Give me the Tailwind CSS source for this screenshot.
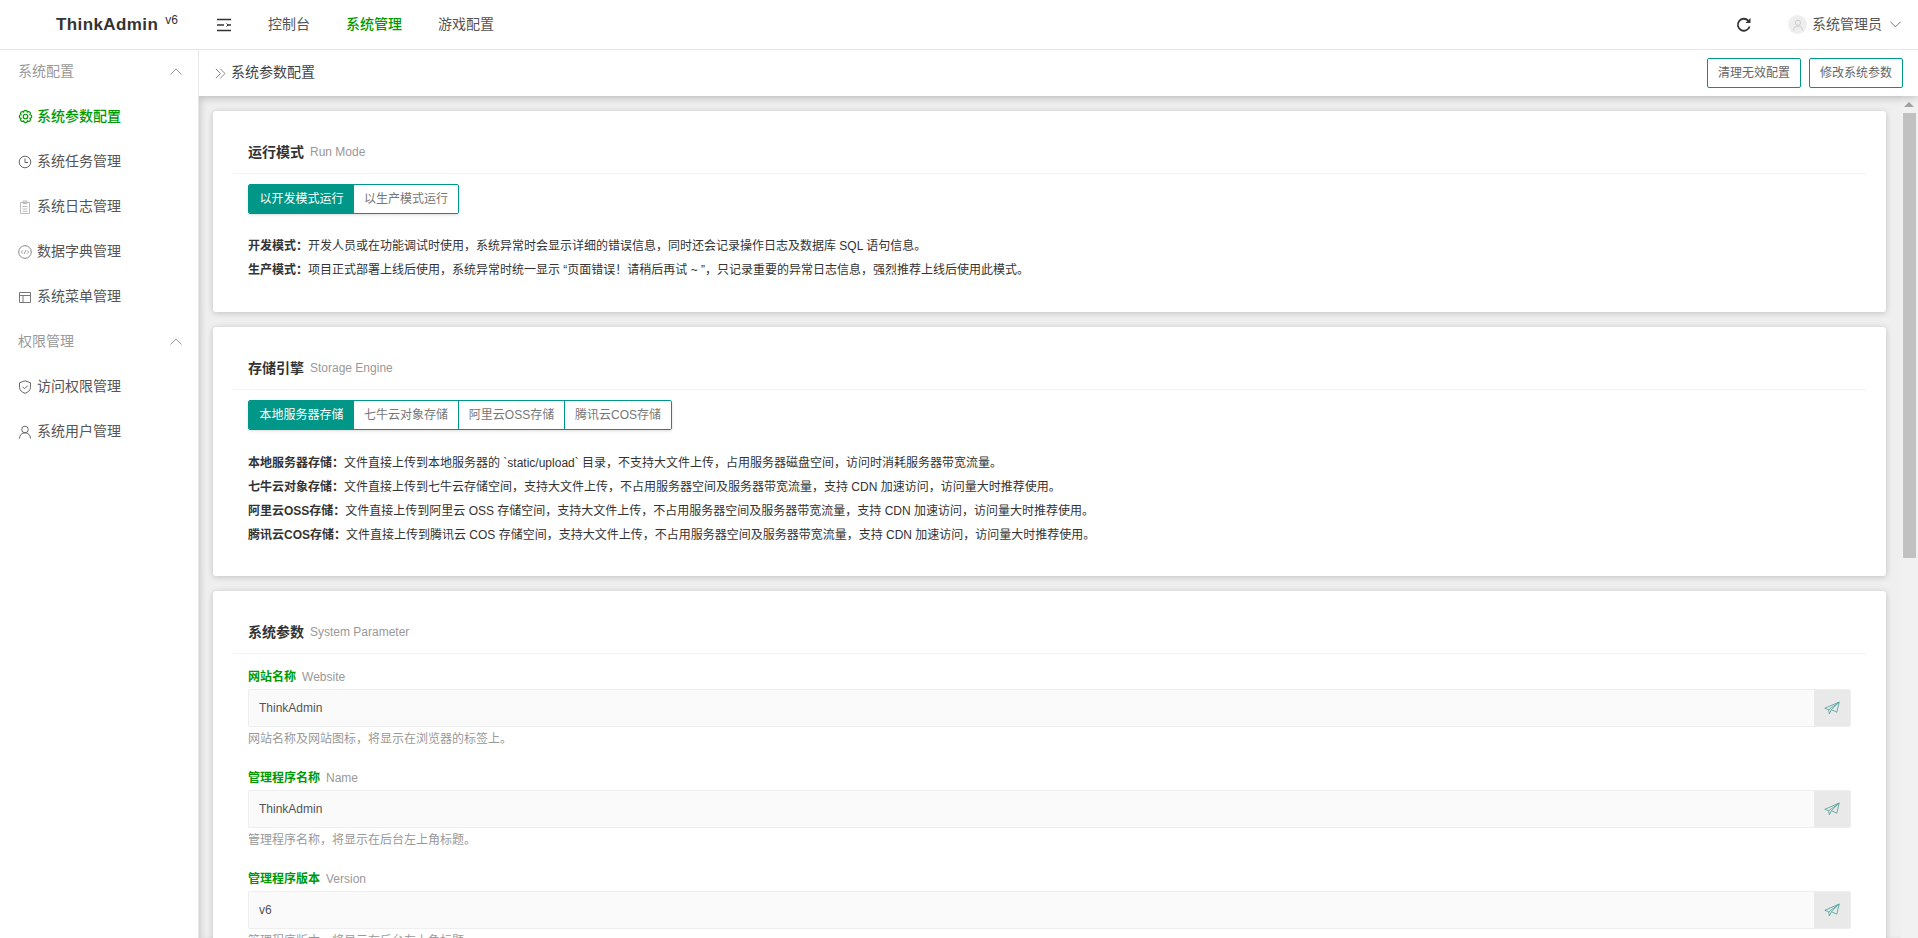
<!DOCTYPE html>
<html lang="zh-CN">
<head>
    <meta charset="UTF-8">
    <title>系统参数配置 · ThinkAdmin</title>
    <script src="https://cdn.jsdelivr.net/npm/@tailwindcss/browser@4"></script>
</head>
<body class="h-[938px] overflow-hidden bg-white text-[#333] text-[14px] font-['Liberation_Sans','Noto_Sans_CJK_SC',sans-serif]">

    <!-- 顶部导航 -->
    <header class="relative z-20 bg-white flex items-center h-[50px] border-b border-[#e6e6e6]">
        <div class="w-[199px] h-full pl-[56px] flex items-center shrink-0">
            <span class="text-[17px] tracking-[0.4px] font-bold text-[#333] leading-none">ThinkAdmin</span>
            <span class="text-[12px] text-[#333] ml-[7px] -mt-[9px] leading-none">v6</span>
        </div>
        <button class="ml-[18px] w-[14px] h-[14px] shrink-0">
            <svg viewBox="0 0 14 14" class="w-[14px] h-[14px]" fill="none" stroke="#333" stroke-width="1.4">
                <path d="M0 1.5h14M0 12.5h14M0 7h7M10 7h4"/>
                <path d="M9.5 5.5l1.6 1.5-1.6 1.5" stroke-width="1"/>
            </svg>
        </button>
        <nav class="flex ml-[19px]">
            <a class="px-[18px] text-[#555]">控制台</a>
            <a class="px-[18px] text-[#090] font-medium">系统管理</a>
            <a class="px-[18px] text-[#555]">游戏配置</a>
        </nav>
        <div class="ml-auto flex items-center pr-[17px]">
            <svg viewBox="0 0 16 16" class="w-[16px] h-[16px]" fill="none" stroke="#333" stroke-width="1.8">
                <path d="M13.6 9.5A6 6 0 1 1 12.2 3.6"/>
                <path d="M14.5 1v5h-5z" fill="#333" stroke="none"/>
            </svg>
            <div class="ml-[36px] w-[19px] h-[19px] rounded-full bg-[#eee] flex items-center justify-center">
                <svg viewBox="0 0 12 12" class="w-[12px] h-[12px]" fill="none" stroke="#ccc" stroke-width="1">
                    <circle cx="6" cy="3.8" r="2.6"/>
                    <path d="M1.5 11.5c0-3 2-4.5 4.5-4.5s4.5 1.500 4.500 4.500"/>
                </svg>
            </div>
            <span class="ml-[5px] text-[#555] w-[70px]">系统管理员</span>
            <svg viewBox="0 0 12 7" class="ml-[8px] w-[11px] h-[7px]" fill="none" stroke="#666" stroke-width="1"><path d="M.5 .5L6 6l5.500-5.500"/></svg>
        </div>
    </header>

    <div class="flex h-[888px]">
        <!-- 侧边菜单 -->
        <aside class="relative z-20 w-[199px] shrink-0 border-r border-[#e6e6e6] bg-white text-[#555]">
            <div class="-mt-[1px] h-[45px] flex items-center justify-between pl-[18px] pr-[16px] text-[#999]">
                <span>系统配置</span>
                <svg viewBox="0 0 12 7" class="w-[12px] h-[7px]" fill="none" stroke="#999" stroke-width="1"><path d="M.5 6.500L6 1l5.500 5.500"/></svg>
            </div>
            <div class="h-[45px] flex items-center pl-[18px] gap-[4px] text-[#090] font-medium">
                <svg viewBox="0 0 16 16" class="w-[15px] h-[15px]" fill="none" stroke="#090" stroke-width="1.300">
                    <path d="M12.800 6.010A2 2 0 0 1 12.800 9.990A2 2 0 0 1 9.990 12.800A2 2 0 0 1 6.010 12.800A2 2 0 0 1 3.200 9.990A2 2 0 0 1 3.200 6.010A2 2 0 0 1 6.010 3.200A2 2 0 0 1 9.990 3.200A2 2 0 0 1 12.800 6.010Z"/>
                    <circle cx="8" cy="8" r="2.400"/>
                </svg>
                <span>系统参数配置</span>
            </div>
            <div class="h-[45px] flex items-center pl-[18px] gap-[5px]">
                <svg viewBox="0 0 14 14" class="w-[14px] h-[14px]" fill="none" stroke="#666" stroke-width="1"><circle cx="7" cy="7" r="5.800"/><path d="M7 3.500V7.500H10"/></svg>
                <span>系统任务管理</span>
            </div>
            <div class="h-[45px] flex items-center pl-[18px] gap-[5px]">
                <svg viewBox="0 0 14 14" class="w-[14px] h-[14px]" fill="none" stroke="#bbb" stroke-width="1"><path d="M2.500 2.500h9v11h-9zM5 1h4v2.500H5zM4.500 6.500h5M4.500 9h5M4.500 11.300h5"/></svg>
                <span>系统日志管理</span>
            </div>
            <div class="h-[45px] flex items-center pl-[18px] gap-[5px]">
                <svg viewBox="0 0 14 14" class="w-[14px] h-[14px]" fill="none" stroke="#888" stroke-width="1"><circle cx="7" cy="7" r="6.300"/><path d="M4.800 5.500L3.300 7l1.500 1.500M9.200 5.500L10.700 7 9.200 8.500M7.800 5L6.200 9" stroke-width=".8"/></svg>
                <span>数据字典管理</span>
            </div>
            <div class="h-[45px] flex items-center pl-[18px] gap-[5px]">
                <svg viewBox="0 0 14 14" class="w-[14px] h-[14px]" fill="none" stroke="#777" stroke-width="1"><path d="M1.500 2.500h11v10h-11zM1.500 5.500h11M5 5.500v7"/></svg>
                <span>系统菜单管理</span>
            </div>
            <div class="h-[45px] flex items-center justify-between pl-[18px] pr-[16px] text-[#999]">
                <span>权限管理</span>
                <svg viewBox="0 0 12 7" class="w-[12px] h-[7px]" fill="none" stroke="#999" stroke-width="1"><path d="M.5 6.500L6 1l5.500 5.500"/></svg>
            </div>
            <div class="h-[45px] flex items-center pl-[18px] gap-[5px]">
                <svg viewBox="0 0 14 14" class="w-[14px] h-[14px]" fill="none" stroke="#666" stroke-width="1"><path d="M7 .8l5.500 2v4.500c0 3-2.500 5-5.500 6-3-1-5.500-3-5.500-6V2.800z"/><path d="M4.500 6.800L6.500 8.800 9.800 5.500"/></svg>
                <span>访问权限管理</span>
            </div>
            <div class="h-[45px] flex items-center pl-[18px] gap-[5px]">
                <svg viewBox="0 0 14 14" class="w-[14px] h-[14px]" fill="none" stroke="#666" stroke-width="1"><circle cx="7" cy="4.500" r="3.300"/><path d="M1.500 13.500c0-3.500 2.500-5.700 5.500-5.700s5.500 2.200 5.500 5.700"/></svg>
                <span>系统用户管理</span>
            </div>
        </aside>

        <!-- 主体 -->
        <main class="flex-1 min-w-0 flex flex-col">
            <div class="relative z-10 h-[46px] shrink-0 bg-white flex items-center pl-[16px] pr-[15px] shadow-[0_2px_8px_rgba(0,0,0,0.2)]">
                <svg viewBox="0 0 11 11" class="w-[11px] h-[11px]" fill="none" stroke="#888" stroke-width="1"><path d="M.8 .8L5.500 5.500.8 10.200M5.300 .8L10 5.500 5.300 10.200"/></svg>
                <span class="ml-[5px] -mt-[2px] text-[#444]">系统参数配置</span>
                <div class="ml-auto flex gap-[8px] text-[12px] text-[#666]">
                    <button class="w-[94px] h-[30px] border border-[#009688] rounded-[2px] bg-white">清理无效配置</button>
                    <button class="w-[94px] h-[30px] border border-[#009688] rounded-[2px] bg-white">修改系统参数</button>
                </div>
            </div>

            <div class="flex-1 min-h-0 flex bg-[#efefef] overflow-hidden">
                <div class="flex-1 min-w-0 pl-[14px] pr-[15px] pt-[15px] flex flex-col gap-[15px] shadow-[inset_5px_0_6px_-3px_rgba(0,0,0,0.15)]">

                    <!-- 运行模式 -->
                    <section class="h-[201px] shrink-0 bg-white rounded-[3px] shadow-[0_1px_6px_rgba(0,0,0,0.2)] px-[20px] pt-[20px]">
                        <h3 class="h-[43px] border-b border-[#f4f4f4] pl-[15px] flex items-center font-bold text-[14px]">运行模式<span class="ml-[6px] text-[12px] font-normal text-[#999]">Run Mode</span></h3>
                        <div class="pl-[15px]">
                            <div class="mt-[10px] inline-flex h-[30px] border border-[#009688] rounded-[2px] overflow-hidden text-[12px] shadow-[0_1px_3px_rgba(0,0,0,0.15)]">
                                <span class="w-[105px] bg-[#009688] text-white flex items-center justify-center">以开发模式运行</span>
                                <span class="w-[104px] bg-white text-[#777] flex items-center justify-center">以生产模式运行</span>
                            </div>
                            <div class="mt-[20px] text-[12px] leading-[24px] text-[#333]">
                                <p><b>开发模式：</b>开发人员或在功能调试时使用，系统异常时会显示详细的错误信息，同时还会记录操作日志及数据库 SQL 语句信息。</p>
                                <p><b>生产模式：</b>项目正式部署上线后使用，系统异常时统一显示 “页面错误！请稍后再试 ~ ”，只记录重要的异常日志信息，强烈推荐上线后使用此模式。</p>
                            </div>
                        </div>
                    </section>

                    <!-- 存储引擎 -->
                    <section class="h-[249px] shrink-0 bg-white rounded-[3px] shadow-[0_1px_6px_rgba(0,0,0,0.2)] px-[20px] pt-[20px]">
                        <h3 class="h-[43px] border-b border-[#f4f4f4] pl-[15px] flex items-center font-bold text-[14px]">存储引擎<span class="ml-[6px] text-[12px] font-normal text-[#999]">Storage Engine</span></h3>
                        <div class="pl-[15px]">
                            <div class="mt-[10px] inline-flex h-[30px] border border-[#009688] rounded-[2px] overflow-hidden text-[12px] shadow-[0_1px_3px_rgba(0,0,0,0.15)]">
                                <span class="w-[105px] bg-[#009688] text-white flex items-center justify-center">本地服务器存储</span>
                                <span class="w-[105px] bg-white text-[#777] flex items-center justify-center border-r border-[#009688]">七牛云对象存储</span>
                                <span class="w-[106px] bg-white text-[#777] flex items-center justify-center border-r border-[#009688]">阿里云OSS存储</span>
                                <span class="w-[106px] bg-white text-[#777] flex items-center justify-center">腾讯云COS存储</span>
                            </div>
                            <div class="mt-[21px] text-[12px] leading-[24px] text-[#333]">
                                <p><b>本地服务器存储：</b>文件直接上传到本地服务器的 `static/upload` 目录，不支持大文件上传，占用服务器磁盘空间，访问时消耗服务器带宽流量。</p>
                                <p><b>七牛云对象存储：</b>文件直接上传到七牛云存储空间，支持大文件上传，不占用服务器空间及服务器带宽流量，支持 CDN 加速访问，访问量大时推荐使用。</p>
                                <p><b>阿里云OSS存储：</b>文件直接上传到阿里云 OSS 存储空间，支持大文件上传，不占用服务器空间及服务器带宽流量，支持 CDN 加速访问，访问量大时推荐使用。</p>
                                <p><b>腾讯云COS存储：</b>文件直接上传到腾讯云 COS 存储空间，支持大文件上传，不占用服务器空间及服务器带宽流量，支持 CDN 加速访问，访问量大时推荐使用。</p>
                            </div>
                        </div>
                    </section>

                    <!-- 系统参数 -->
                    <section class="shrink-0 bg-white rounded-[3px] shadow-[0_1px_6px_rgba(0,0,0,0.2)] px-[20px] pt-[20px] pb-[20px]">
                        <h3 class="h-[43px] border-b border-[#f4f4f4] pl-[15px] flex items-center font-bold text-[14px]">系统参数<span class="ml-[6px] text-[12px] font-normal text-[#999]">System Parameter</span></h3>
                        <div class="pl-[15px] pr-[15px] pt-[13px] text-[12px]">
                            <label class="block h-[22px] leading-[20px] font-bold text-[#090]">网站名称<span class="ml-[6px] font-normal text-[#999]">Website</span></label>
                            <div class="flex h-[38px] border border-[#eee] rounded-[2px] bg-[#fafafa]">
                                <input class="flex-1 min-w-0 px-[10px] bg-transparent text-[#555] outline-none" value="ThinkAdmin">
                                <span class="w-[36px] bg-[#e9e9e9] flex items-center justify-center">
                                    <svg viewBox="0 0 16 14" class="w-[16px] h-[14px]" fill="none" stroke="#4a9e98" stroke-width=".8"><path d="M.8 7.300L15.200 1 12.800 11.200 7.500 8.700 5.300 12.800 4.700 8.800zM4.700 8.800L15.200 1 7.500 8.700"/></svg>
                                </span>
                            </div>
                            <p class="h-[24px] leading-[24px] text-[#999]">网站名称及网站图标，将显示在浏览器的标签上。</p>

                            <label class="mt-[17px] block h-[22px] leading-[20px] font-bold text-[#090]">管理程序名称<span class="ml-[6px] font-normal text-[#999]">Name</span></label>
                            <div class="flex h-[38px] border border-[#eee] rounded-[2px] bg-[#fafafa]">
                                <input class="flex-1 min-w-0 px-[10px] bg-transparent text-[#555] outline-none" value="ThinkAdmin">
                                <span class="w-[36px] bg-[#e9e9e9] flex items-center justify-center">
                                    <svg viewBox="0 0 16 14" class="w-[16px] h-[14px]" fill="none" stroke="#4a9e98" stroke-width=".8"><path d="M.8 7.300L15.200 1 12.800 11.200 7.500 8.700 5.300 12.800 4.700 8.800zM4.700 8.800L15.200 1 7.500 8.700"/></svg>
                                </span>
                            </div>
                            <p class="h-[24px] leading-[24px] text-[#999]">管理程序名称，将显示在后台左上角标题。</p>

                            <label class="mt-[17px] block h-[22px] leading-[20px] font-bold text-[#090]">管理程序版本<span class="ml-[6px] font-normal text-[#999]">Version</span></label>
                            <div class="flex h-[38px] border border-[#eee] rounded-[2px] bg-[#fafafa]">
                                <input class="flex-1 min-w-0 px-[10px] bg-transparent text-[#555] outline-none" value="v6">
                                <span class="w-[36px] bg-[#e9e9e9] flex items-center justify-center">
                                    <svg viewBox="0 0 16 14" class="w-[16px] h-[14px]" fill="none" stroke="#4a9e98" stroke-width=".8"><path d="M.8 7.300L15.200 1 12.800 11.200 7.500 8.700 5.300 12.800 4.700 8.800zM4.700 8.800L15.200 1 7.500 8.700"/></svg>
                                </span>
                            </div>
                            <p class="h-[24px] leading-[24px] text-[#999]">管理程序版本，将显示在后台左上角标题。</p>
                        </div>
                    </section>
                </div>

                <!-- 滚动条 -->
                <div class="w-[17px] shrink-0 bg-[#f1f1f1] flex flex-col items-center pr-[1px]">
                    <div class="mt-[6px] w-0 h-0 border-x-[5px] border-x-transparent border-b-[5px] border-b-[#a3a3a3]"></div>
                    <div class="mt-[6px] w-[13px] h-[445px] bg-[#c1c1c1]"></div>
                </div>
            </div>
        </main>
    </div>
</body>
</html>
